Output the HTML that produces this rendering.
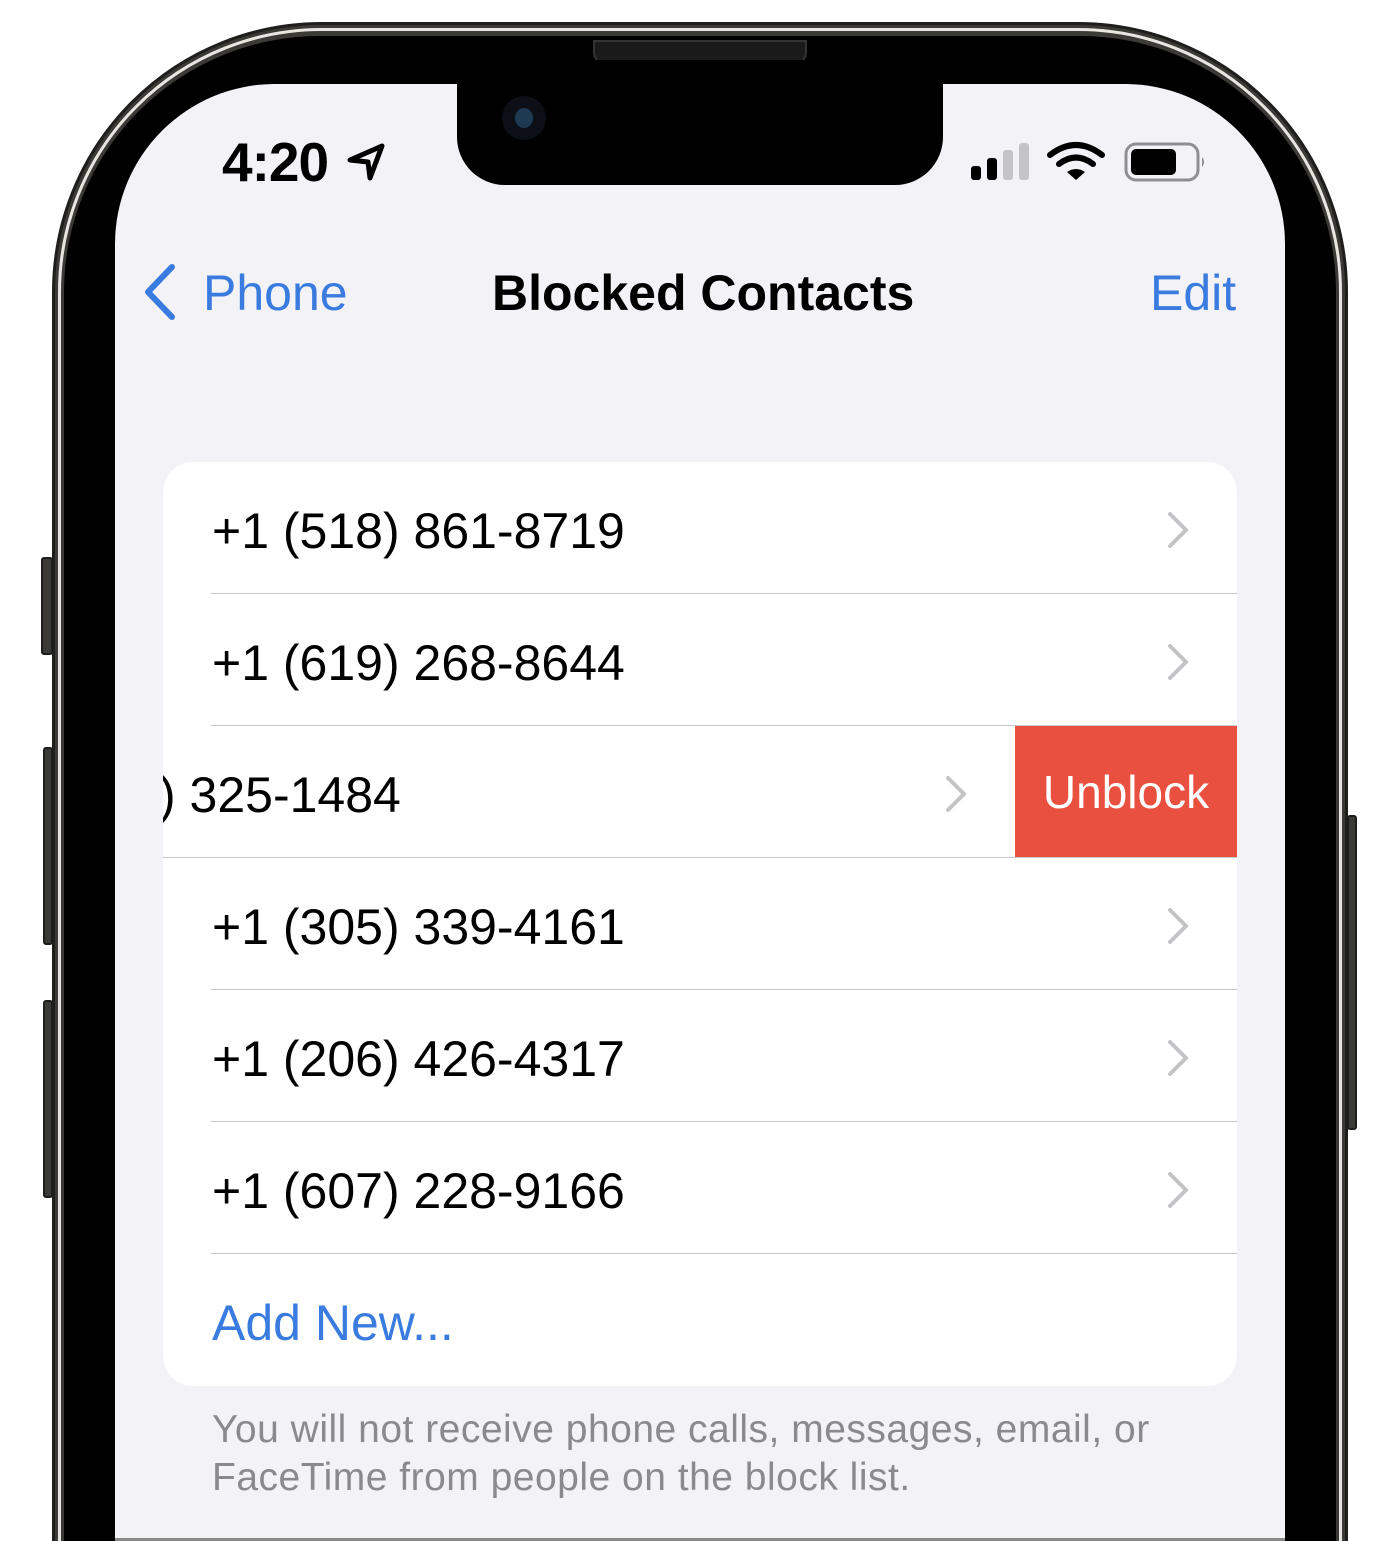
<!DOCTYPE html>
<html style="width:1400px;height:1541px;overflow:hidden"><head><meta charset="utf-8"><style>
*{margin:0;padding:0;box-sizing:border-box}
html,body{width:1400px;height:1541px;overflow:hidden}
body{background:#fff;position:relative;font-family:"Liberation Sans",sans-serif}
#wrap{position:absolute;left:0;top:0;width:1400px;height:1541px;overflow:hidden}
.abs{position:absolute}
.frame{left:52px;top:22px;width:1296px;bottom:-60px;border-radius:270px 270px 0 0;background:#3b3a36;border:3px solid #1e1e1c}
.frame2{left:58px;top:28px;width:1284px;bottom:-60px;border-radius:264px 264px 0 0;border:3px solid #e8e6e0}
.bezel{left:64px;top:36px;width:1272px;bottom:-60px;border-radius:256px 256px 0 0;background:#000}
.screen{left:115px;top:84px;width:1170px;bottom:0;border-radius:160px 160px 0 0;background:#f2f2f7;overflow:hidden}
.notch{left:457px;top:60px;width:486px;height:125px;background:#000;border-radius:0 0 48px 48px}
.btn{background:#3b3a36;border:2px solid #1e1e1c;border-radius:3px}
.row{position:absolute;left:0;width:1074px;height:132px}
.num{position:absolute;left:49px;top:40px;font-size:50px;color:#000;white-space:nowrap}
.sep{position:absolute;left:48px;right:0;bottom:0;height:1px;background:#c8c8cc}
.chev{position:absolute;left:1002px;top:48px}
</style></head><body><div id="wrap">
<div class="abs btn" style="left:41px;top:557px;width:12px;height:98px"></div>
<div class="abs btn" style="left:43px;top:747px;width:10px;height:198px"></div>
<div class="abs btn" style="left:43px;top:1000px;width:10px;height:198px"></div>
<div class="abs btn" style="left:1347px;top:815px;width:10px;height:315px"></div>
<div class="abs frame"></div>
<div class="abs frame2"></div>
<div class="abs bezel"></div>
<div class="abs" style="left:593px;top:40px;width:214px;height:26px;border-radius:0 0 14px 14px;background:#1a1a1a;border:2px solid #333"></div>
<div class="abs screen">
  <div class="abs" style="left:0;top:1454px;width:1170px;height:4px;background:#888"></div>
</div>
<div class="abs notch"></div>
<div class="abs" style="left:502px;top:96px;width:44px;height:44px;border-radius:50%;background:#0c0f16"></div>
<div class="abs" style="left:515px;top:108px;width:18px;height:20px;border-radius:50%;background:#1d3a52"></div>

<div class="abs" style="left:222px;top:130px;font-size:55px;font-weight:bold;letter-spacing:-1px">4:20</div>
<svg class="abs" style="left:344px;top:140px" width="44" height="44" viewBox="0 0 44 44"><path d="M6 20 L38 6 L26 38 L24 22 Z" fill="none" stroke="#000" stroke-width="5" stroke-linejoin="round"/></svg>
<svg class="abs" style="left:968px;top:140px" width="240" height="44" viewBox="0 0 240 44">
<rect x="3" y="26" width="10" height="14" rx="3" fill="#000"/>
<rect x="19" y="18" width="10" height="22" rx="3" fill="#000"/>
<rect x="35" y="10" width="10" height="30" rx="3" fill="#c4c4c8"/>
<rect x="51" y="3" width="10" height="37" rx="3" fill="#c4c4c8"/>
<path d="M82 15 Q108 -5 134 15" fill="none" stroke="#000" stroke-width="6" stroke-linecap="round"/>
<path d="M91 24 Q108 11 125 24" fill="none" stroke="#000" stroke-width="6" stroke-linecap="round"/>
<path d="M99 32 L108 40 L117 32 Q108 26 99 32Z" fill="#000"/>
<rect x="158" y="4" width="72" height="36" rx="10" fill="none" stroke="#8e8e93" stroke-width="3"/>
<rect x="163" y="9" width="45" height="26" rx="5" fill="#000"/>
<path d="M234 17 Q238 22 234 27Z" fill="#8e8e93"/>
</svg>

<svg class="abs" style="left:140px;top:262px" width="40" height="60" viewBox="0 0 40 60"><path d="M32 5 L8 30 L32 55" fill="none" stroke="#3a7be0" stroke-width="6" stroke-linecap="round" stroke-linejoin="round"/></svg>
<div class="abs" style="left:203px;top:264px;font-size:50px;color:#3a7be0">Phone</div>
<div class="abs" style="left:492px;top:264px;font-size:50px;font-weight:bold">Blocked Contacts</div>
<div class="abs" style="left:1150px;top:264px;font-size:50px;color:#3a7be0">Edit</div>

<div class="abs" style="left:163px;top:462px;width:1074px;height:924px;background:#fff;border-radius:30px;overflow:hidden">
  <div class="row" style="top:0"><div class="num">+1 (518) 861-8719</div><div class="sep"></div><svg class="chev" width="26" height="40" viewBox="0 0 26 40"><path d="M5 4 L21 20 L5 36" fill="none" stroke="#c4c4c7" stroke-width="4" stroke-linecap="round" stroke-linejoin="round"/></svg></div>
  <div class="row" style="top:132px"><div class="num">+1 (619) 268-8644</div><div class="sep"></div><svg class="chev" width="26" height="40" viewBox="0 0 26 40"><path d="M5 4 L21 20 L5 36" fill="none" stroke="#c4c4c7" stroke-width="4" stroke-linecap="round" stroke-linejoin="round"/></svg></div>
  <div class="row" style="top:264px"><div class="num" style="left:-4px">) 325-1484</div><div class="sep" style="left:0"></div><svg class="chev" style="left:780px" width="26" height="40" viewBox="0 0 26 40"><path d="M5 4 L21 20 L5 36" fill="none" stroke="#c4c4c7" stroke-width="4" stroke-linecap="round" stroke-linejoin="round"/></svg>
    <div style="position:absolute;left:852px;top:0;width:222px;height:131px;background:#e9503f;color:#fff;font-size:46px;text-align:center;line-height:133px">Unblock</div></div>
  <div class="row" style="top:396px"><div class="num">+1 (305) 339-4161</div><div class="sep"></div><svg class="chev" width="26" height="40" viewBox="0 0 26 40"><path d="M5 4 L21 20 L5 36" fill="none" stroke="#c4c4c7" stroke-width="4" stroke-linecap="round" stroke-linejoin="round"/></svg></div>
  <div class="row" style="top:528px"><div class="num">+1 (206) 426-4317</div><div class="sep"></div><svg class="chev" width="26" height="40" viewBox="0 0 26 40"><path d="M5 4 L21 20 L5 36" fill="none" stroke="#c4c4c7" stroke-width="4" stroke-linecap="round" stroke-linejoin="round"/></svg></div>
  <div class="row" style="top:660px"><div class="num">+1 (607) 228-9166</div><div class="sep"></div><svg class="chev" width="26" height="40" viewBox="0 0 26 40"><path d="M5 4 L21 20 L5 36" fill="none" stroke="#c4c4c7" stroke-width="4" stroke-linecap="round" stroke-linejoin="round"/></svg></div>
  <div class="row" style="top:792px"><div class="num" style="color:#3a7be0">Add New...</div></div>
</div>
<div class="abs" style="left:212px;top:1406px;font-size:39px;letter-spacing:0.5px;color:#8a8a8e;line-height:48px;white-space:nowrap">You will not receive phone calls, messages, email, or<br>FaceTime from people on the block list.</div>
</div></body></html>
